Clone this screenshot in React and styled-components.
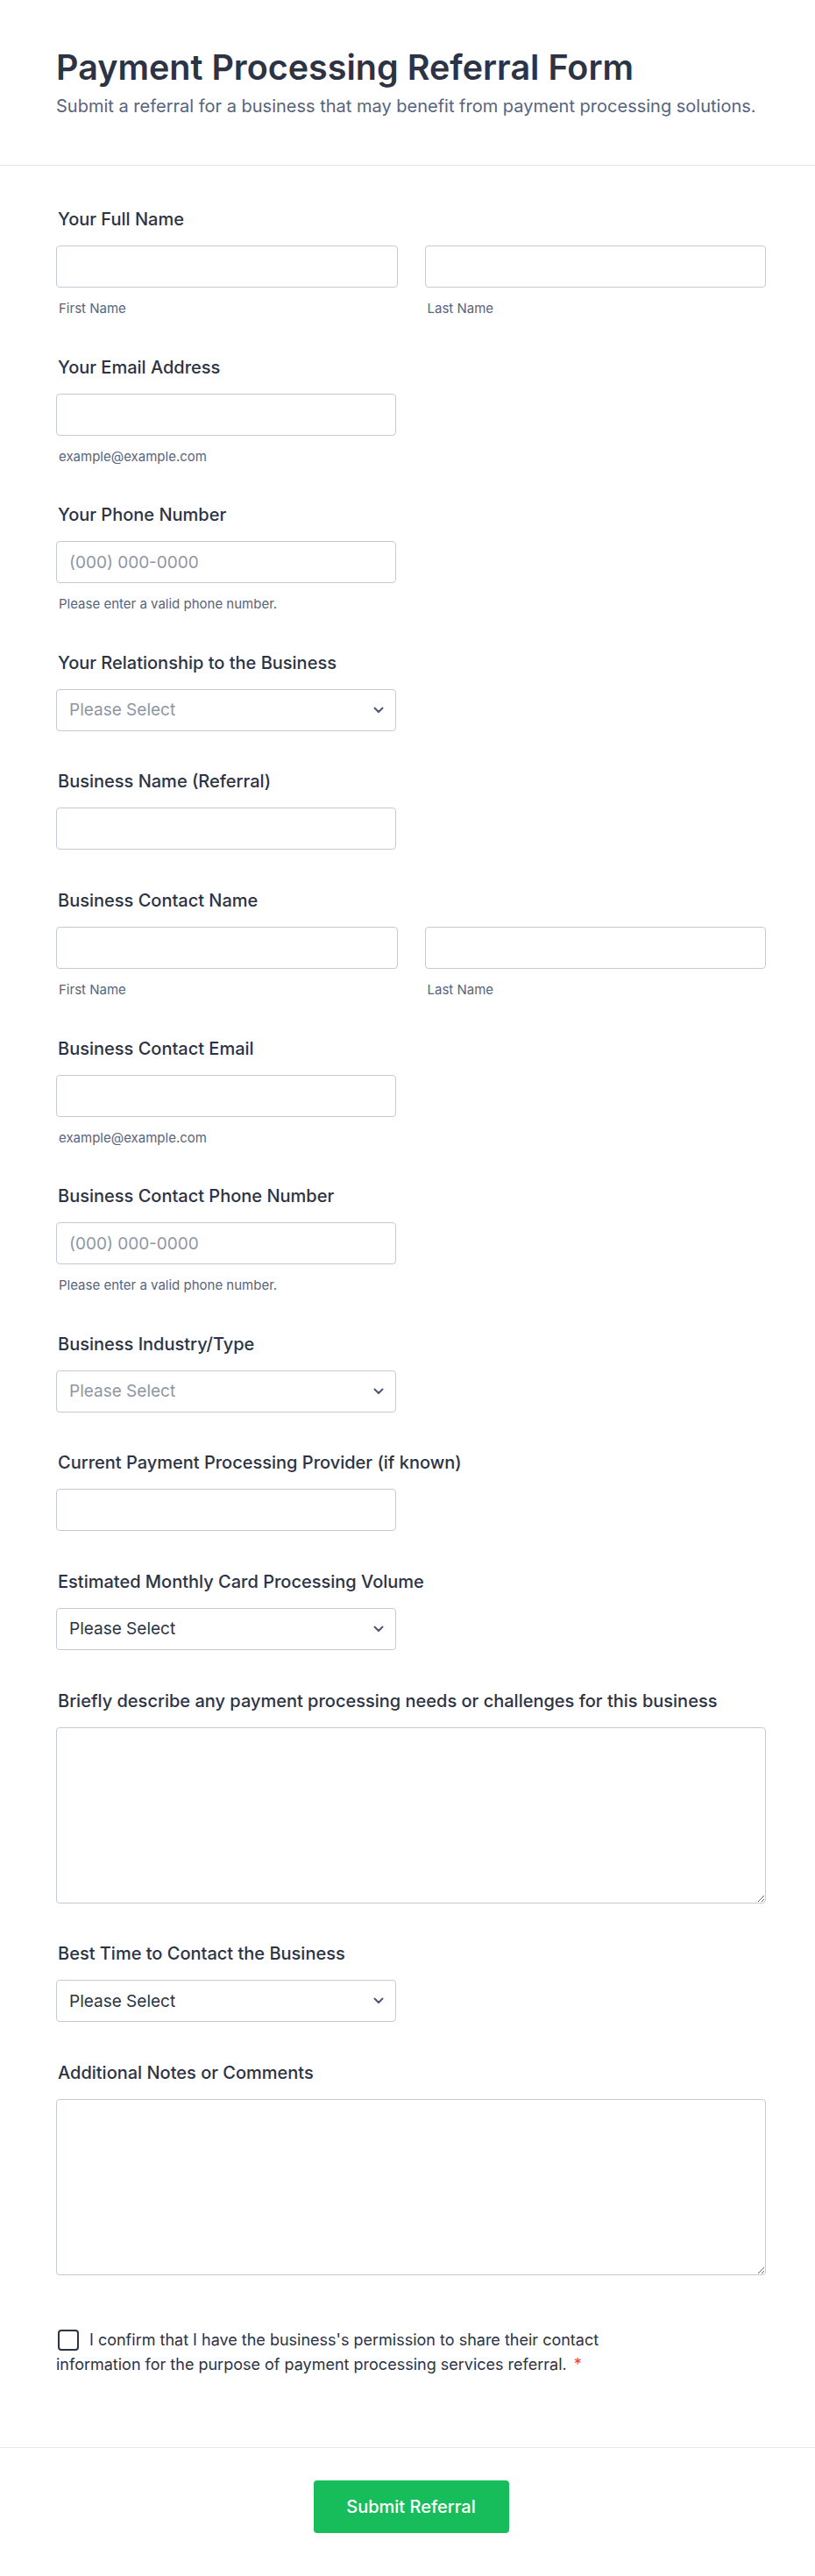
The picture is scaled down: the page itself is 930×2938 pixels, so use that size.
import styled, { createGlobalStyle } from 'styled-components';

const GlobalStyle = createGlobalStyle`
  * { box-sizing: border-box; }
  body {
    margin: 0;
    background: #fff;
    font-family: Inter, 'Noto Sans', sans-serif;
    color: #2c3345;
  }
`;

const Page = styled.div`
  width: 930px;
  background: #fff;
`;

const Header = styled.header`
  padding: 53px 64px 53px;
  border-bottom: 1px solid #e3e6ee;
`;

const Title = styled.h1`
  margin: 0;
  font-size: 39.5px;
  line-height: 48px;
  font-weight: 600;
  color: #2c3345;
`;

const Subtitle = styled.p`
  margin: 6px 0 0;
  font-size: 20px;
  line-height: 28px;
  color: #57647e;
`;

const Form = styled.form`
  display: flex;
  flex-direction: column;
  gap: 45.6px;
  padding: 49px 56px 80px 64px;
`;

const Field = styled.div`
  display: flex;
  flex-direction: column;
  align-items: flex-start;
`;

const Label = styled.label`
  padding-left: 2px;
  margin-bottom: 18px;
  font-size: 20px;
  line-height: 24px;
  font-weight: 500;
  color: #2c3345;
`;

const SubLabel = styled.span`
  display: block;
  padding-left: 3px;
  margin-top: 15px;
  font-size: 15px;
  line-height: 18px;
  color: #57647e;
`;

const NameRow = styled.div`
  display: grid;
  grid-template-columns: 1fr 1fr;
  column-gap: 31px;
  width: 100%;
`;

const NameCell = styled.div`
  display: flex;
  flex-direction: column;
`;

const TextInput = styled.input`
  width: ${(p) => (p.$full ? '100%' : '388px')};
  height: 48px;
  padding: 0 14px;
  border: 1px solid #c3cad8;
  border-radius: 4px;
  background: #fff;
  font-family: inherit;
  font-size: 19px;
  color: #2c3345;
  outline: none;
  &::placeholder {
    color: #8f96a3;
  }
`;

const SelectWrap = styled.div`
  position: relative;
  width: 388px;
`;

const Select = styled.select`
  appearance: none;
  width: 100%;
  height: 48px;
  padding: 0 40px 0 14px;
  border: 1px solid #c3cad8;
  border-radius: 4px;
  background: #fff;
  font-family: inherit;
  font-size: 19px;
  color: ${(p) => (p.$muted ? '#8f96a3' : '#2c3345')};
  outline: none;
`;

const Chevron = styled.svg`
  position: absolute;
  right: 14px;
  top: 50%;
  transform: translateY(-50%);
  pointer-events: none;
`;

const TextArea = styled.textarea`
  width: 100%;
  height: 201px;
  padding: 12px 14px;
  border: 1px solid #c3cad8;
  border-radius: 4px;
  background: #fff;
  font-family: inherit;
  font-size: 19px;
  color: #2c3345;
  outline: none;
`;

const Consent = styled.label`
  display: block;
  max-width: 720px;
  margin-top: 14.5px;
  font-size: 18px;
  line-height: 28px;
  color: #2c3345;
`;

const Check = styled.input`
  appearance: none;
  display: inline-block;
  width: 24px;
  height: 24px;
  margin: 0 12px 0 2px;
  border: 2px solid #2c3345;
  border-radius: 4px;
  background: #fff;
  vertical-align: -6px;
`;

const Star = styled.span`
  margin-left: 8px;
  color: #f23a3c;
`;

const Footer = styled.div`
  display: flex;
  justify-content: center;
  padding: 37px 56px 49px 64px;
  border-top: 1px solid #e5e8ef;
`;

const Submit = styled.button`
  width: 223px;
  height: 60px;
  border: 0;
  border-radius: 4px;
  background: #18bd5b;
  color: #fff;
  font-family: inherit;
  font-size: 20px;
  font-weight: 500;
  cursor: pointer;
`;

const ChevronIcon = () => (
  <Chevron width="12" height="8" viewBox="0 0 12 8">
    <path d="M1.5 1.5 6 6l4.5-4.5" fill="none" stroke="#4a5578" strokeWidth="2" strokeLinecap="round" strokeLinejoin="round" />
  </Chevron>
);

const NameField = ({ label }) => (
  <Field>
    <Label>{label}</Label>
    <NameRow>
      <NameCell>
        <TextInput $full />
        <SubLabel>First Name</SubLabel>
      </NameCell>
      <NameCell>
        <TextInput $full />
        <SubLabel>Last Name</SubLabel>
      </NameCell>
    </NameRow>
  </Field>
);

const InputField = ({ label, placeholder, hint }) => (
  <Field>
    <Label>{label}</Label>
    <TextInput placeholder={placeholder} />
    {hint && <SubLabel>{hint}</SubLabel>}
  </Field>
);

const SelectField = ({ label, muted }) => (
  <Field>
    <Label>{label}</Label>
    <SelectWrap>
      <Select $muted={muted} defaultValue="">
        <option value="">Please Select</option>
      </Select>
      <ChevronIcon />
    </SelectWrap>
  </Field>
);

const AreaField = ({ label }) => (
  <Field>
    <Label>{label}</Label>
    <TextArea />
  </Field>
);

export default function App() {
  return (
    <Page>
      <GlobalStyle />
      <Header>
        <Title>Payment Processing Referral Form</Title>
        <Subtitle>Submit a referral for a business that may benefit from payment processing solutions.</Subtitle>
      </Header>
      <Form onSubmit={(e) => e.preventDefault()}>
        <NameField label="Your Full Name" />
        <InputField label="Your Email Address" hint="example@example.com" />
        <InputField label="Your Phone Number" placeholder="(000) 000-0000" hint="Please enter a valid phone number." />
        <SelectField label="Your Relationship to the Business" muted />
        <InputField label="Business Name (Referral)" />
        <NameField label="Business Contact Name" />
        <InputField label="Business Contact Email" hint="example@example.com" />
        <InputField label="Business Contact Phone Number" placeholder="(000) 000-0000" hint="Please enter a valid phone number." />
        <SelectField label="Business Industry/Type" muted />
        <InputField label="Current Payment Processing Provider (if known)" />
        <SelectField label="Estimated Monthly Card Processing Volume" />
        <AreaField label="Briefly describe any payment processing needs or challenges for this business" />
        <SelectField label="Best Time to Contact the Business" />
        <AreaField label="Additional Notes or Comments" />
        <Consent>
          <Check type="checkbox" />
          I confirm that I have the business's permission to share their contact information for the purpose of payment processing services referral.
          <Star>*</Star>
        </Consent>
      </Form>
      <Footer>
        <Submit type="submit">Submit Referral</Submit>
      </Footer>
    </Page>
  );
}
